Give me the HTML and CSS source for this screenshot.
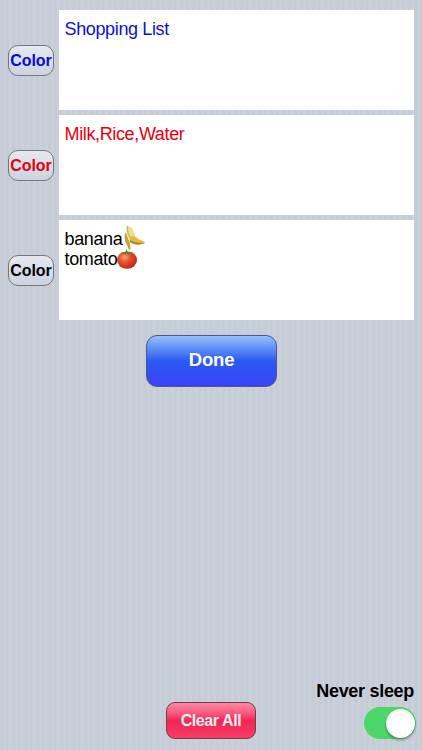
FILE: index.html
```html
<!DOCTYPE html>
<html lang="en">
<head>
    <meta charset="UTF-8">
    <meta name="viewport" content="width=device-width, initial-scale=1.0">
    <title>Shopping List</title>
    <link rel="stylesheet" href="styles.css">
</head>
<body>
    <div class="wrap">
        <!-- note rows -->
        <section class="row">
            <button class="color-btn blue">Color</button>
            <div class="note blue2">Shopping List</div>
        </section>
        <section class="row">
            <button class="color-btn red">Color</button>
            <div class="note red2">Milk,Rice,Water</div>
        </section>
        <section class="row">
            <button class="color-btn">Color</button>
            <div class="note">
                <div class="line">banana<svg class="emoji banana" viewBox="0 0 24 26">
                    <path d="M4 7 C2 10 2 15 5 20 L7 25 L8.5 24 L8 18 C6 14 5 10 4 7 Z" fill="#c4a23c"/>
                    <path d="M5 1 C9 1 12 5 13 11 L7 13 C5 8 4 4 5 1 Z" fill="#f0dd92"/>
                    <path d="M5 1 C4 4 5 8 7 13 L8 12.6 C6.5 8 5.5 4 6 1 Z" fill="#cdb056"/>
                    <path d="M7 12 C10 10 13 11 15 13 C17 15 20 15 23 17.5 C18 20.5 11 20 8 17 Z" fill="#e6bc3a"/>
                    <path d="M8 17 C11 20 18 20.5 23 17.5 C18 18 12 18 8 15 Z" fill="#a8862a"/>
                </svg></div>
                <div class="line">tomato<svg class="emoji tomato" viewBox="0 0 20 20">
                    <defs>
                        <radialGradient id="tom" cx="38%" cy="35%" r="72%">
                            <stop offset="0" stop-color="#f8a27c"/>
                            <stop offset=".4" stop-color="#e8502c"/>
                            <stop offset="1" stop-color="#b02614"/>
                        </radialGradient>
                    </defs>
                    <ellipse cx="10" cy="11" rx="10" ry="8.8" fill="url(#tom)"/>
                    <path d="M3.5 3.5 L8.5 3.5 L9.5 0 L10.8 3.5 L16.5 3 L12.5 5.2 L10 4.6 L7.5 5.4 Z" fill="#4c8a35"/>
                </svg></div>
            </div>
        </section>

        <button class="done">Done</button>

        <!-- bottom bar -->
        <footer class="bottom">
            <button class="clear">Clear All</button>
            <div class="sleep">
                <span class="sleep-label">Never sleep</span>
                <span class="toggle"><span class="knob"></span></span>
            </div>
        </footer>
    </div>
</body>
</html>
```

FILE: styles.css
```css
html,body{
    margin: 0;
    padding: 0;
}
body{
    font-family: "Liberation Sans", Arial, sans-serif;
    /* pinstripe */
    background: repeating-linear-gradient(to right, #c5ccd5 0, #c5ccd5 3px, #cad0d9 3px, #cad0d9 6px);
}
.wrap{
    display: flex;
    flex-direction: column;
    width: 422px;
    height: 750px;
    padding-top: 10px;
    box-sizing: border-box;
    overflow: hidden;
}
.row{
    display: flex;
    align-items: center;
    gap: 5px;
    height: 100px;
    margin-bottom: 5px;
    padding-left: 8px;
}
button{
    font-family: inherit;
    font-weight: bold;
    padding: 0;
    cursor: pointer;
}

/* color buttons */
.color-btn{
    width: 46px;
    height: 31px;
    padding-top: 2px;
    font-size: 16px;
    letter-spacing: -0.1px;
    color: #000;
    border: 1px solid #74787e;
    border-radius: 10px;
    background: linear-gradient(to bottom, #e6e9f0, #d8dde8 50%, #ccd2df);
}
.color-btn.blue{
    color: #0a0ad6;
}
.color-btn.red{
    color: #e4000c;
}

/* note box */
.note{
    width: 355px;
    height: 100px;
    box-sizing: border-box;
    padding: 9px 6px 9px 5.5px;
    background: #fff;
    font-size: 18px;
    letter-spacing: -0.36px;
    line-height: 20px;
    color: #000;
}
.blue2{
    color: #0c12cc;
}
.red2{
    color: #e40010;
}
.line{
    display: flex;
    align-items: center;
    height: 20px;
}
.emoji{
    flex: none;
}
.banana{
    width: 24px;
    height: 26px;
    margin-top: -3px;
}
.tomato{
    width: 20px;
    height: 20px;
}

/* done */
.done{
    align-self: flex-start;
    width: 131px;
    height: 52px;
    margin: 10px 0 0 146px;
    padding-bottom: 2px;
    font-size: 18.5px;
    letter-spacing: -0.2px;
    color: #fff;
    border: 1px solid #4a5a80;
    border-radius: 11px;
    background: linear-gradient(to bottom, #96c0fb 0, #5f8ff5 25%, #2a5af2 50%, #3a42f8 100%);
}

/* bottom */
.bottom{
    display: flex;
    justify-content: space-between;
    align-items: flex-end;
    margin-top: auto;
    padding: 0 6px 11px 166px;
}
.clear{
    width: 90px;
    height: 37px;
    font-size: 16px;
    letter-spacing: -0.4px;
    color: #fdeef0;
    border: 1px solid #7a3a4a;
    border-radius: 9px;
    background: linear-gradient(to bottom, #f98aa0 0, #f7587c 30%, #f02652 50%, #f83e68 100%);
}
.sleep{
    display: flex;
    flex-direction: column;
    align-items: flex-end;
    gap: 6px;
}
.sleep-label{
    font-size: 18px;
    letter-spacing: -0.3px;
    font-weight: bold;
    line-height: 20px;
    color: #000;
    margin-right: 2px;
}
.toggle{
    display: flex;
    justify-content: flex-end;
    align-items: center;
    width: 52px;
    height: 32px;
    box-sizing: border-box;
    padding-right: 1px;
    border-radius: 16px;
    background: #4cd768;
}
.knob{
    width: 29px;
    height: 29px;
    border-radius: 50%;
    background: #fff;
    box-shadow: 0 2px 3px rgba(0, 0, 0, 0.35);
}
```
